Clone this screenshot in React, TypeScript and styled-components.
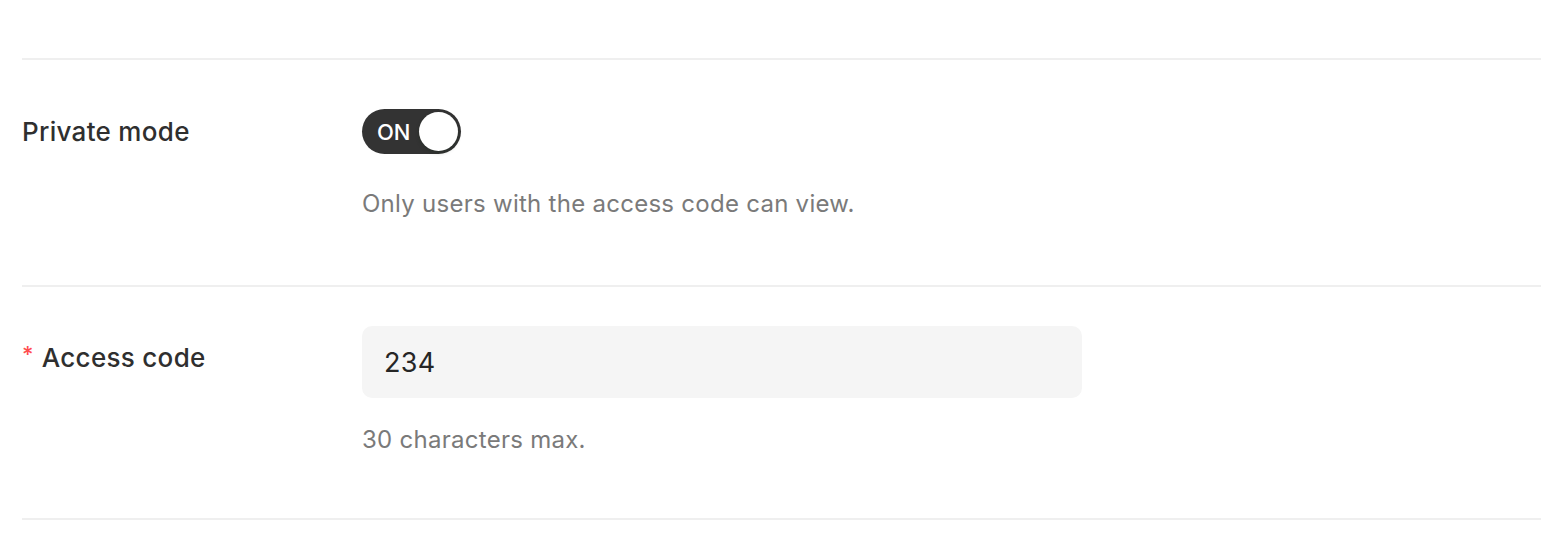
import React from "react";
import styled, { createGlobalStyle } from "styled-components";

const Global = createGlobalStyle`
  html, body { margin: 0; padding: 0; background: #ffffff; }
  body { font-family: Inter, "Noto Sans", sans-serif; -webkit-font-smoothing: antialiased; }
  * { box-sizing: border-box; }
`;

const Page = styled.div`
  width: 1542px;
  padding: 58px 1px 0 22px;
`;

const Divider = styled.div`
  height: 2px;
  background: #efefef;
`;

const Row = styled.div<{ $top: number; $bottom: number }>`
  display: grid;
  grid-template-columns: 340px 1fr;
  padding-top: ${(p) => p.$top}px;
  padding-bottom: ${(p) => p.$bottom}px;
`;

const Label = styled.div<{ $lh: number }>`
  display: flex;
  align-items: center;
  font-size: 26px;
  font-weight: 500;
  letter-spacing: 0.3px;
  color: #2f2f2f;
  line-height: ${(p) => p.$lh}px;
  height: ${(p) => p.$lh}px;
`;

const Star = styled.span`
  color: #ff4d4f;
  font-size: 22px;
  font-weight: 500;
  line-height: 1;
  margin-right: 8px;
  margin-bottom: 8px;
`;

const Control = styled.div`
  display: flex;
  flex-direction: column;
  align-items: flex-start;
`;

const Switch = styled.button`
  position: relative;
  width: 99px;
  height: 45px;
  border: none;
  border-radius: 23px;
  background: #333333;
  padding: 0 0 0 15px;
  display: flex;
  align-items: center;
  cursor: pointer;
  font-family: Inter, sans-serif;
  font-size: 22px;
  font-weight: 500;
  color: #ffffff;
`;

const Knob = styled.span`
  position: absolute;
  right: 3px;
  top: 3px;
  width: 39px;
  height: 39px;
  border-radius: 50%;
  background: #ffffff;
  box-shadow: 0 2px 4px rgba(0, 35, 11, 0.2);
`;

const Help = styled.div<{ $mt: number }>`
  margin-top: ${(p) => p.$mt}px;
  font-size: 24px;
  letter-spacing: 0.27px;
  line-height: 36px;
  color: #7a7a7a;
`;

const Input = styled.input`
  width: 720px;
  height: 72px;
  border: none;
  outline: none;
  border-radius: 10px;
  background: #f5f5f5;
  padding: 0 22px;
  font-family: Inter, sans-serif;
  font-size: 27px;
  letter-spacing: 0.3px;
  color: #262626;
`;

export default function App() {
  return (
    <>
      <Global />
      <Page>
        <Divider />
        <Row $top={49} $bottom={63}>
          <Label $lh={45}>Private mode</Label>
          <Control>
            <Switch type="button" role="switch" aria-checked="true">
              ON
              <Knob />
            </Switch>
            <Help $mt={32}>Only users with the access code can view.</Help>
          </Control>
        </Row>
        <Divider />
        <Row $top={39} $bottom={60}>
          <Label $lh={64}>
            <Star>*</Star>Access code
          </Label>
          <Control>
            <Input defaultValue="234" />
            <Help $mt={24}>30 characters max.</Help>
          </Control>
        </Row>
        <Divider />
      </Page>
    </>
  );
}
